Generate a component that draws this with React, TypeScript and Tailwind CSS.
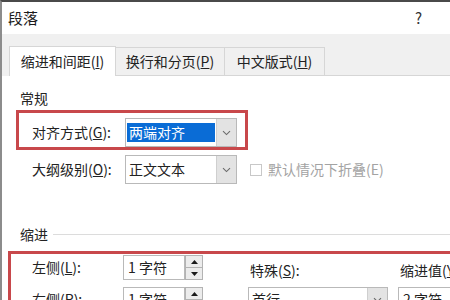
import React from "react";

const FONT = "font-['Microsoft_YaHei','Noto_Sans_CJK_SC','Noto_Sans',sans-serif]";

function Chevron() {
  return (
    <svg width="9" height="6" viewBox="0 0 9 6" fill="none">
      <path d="M1 1.2 L4.5 4.6 L8 1.2" stroke="#6b6b6b" strokeWidth="1.1" />
    </svg>
  );
}

function Combo({ text, hl, w }: { text: string; hl?: boolean; w: string }) {
  return (
    <div className={`${w} shrink-0 h-full flex border border-[#b9b9b9] bg-white`}>
      <div className="flex-1 flex items-center px-[1px]">
        {hl ? (
          <span className="w-full h-[19px] bg-[#0a6cd6] text-white pl-[2px] leading-[19px]">{text}</span>
        ) : (
          <span className="pl-[2px]">{text}</span>
        )}
      </div>
      <div className="w-[20px] bg-[#e3e3e3] border-l border-[#cfcfcf] flex items-center justify-center">
        <Chevron />
      </div>
    </div>
  );
}

function Spin() {
  return (
    <div className="w-[18px] shrink-0 h-full flex flex-col">
      {[0, 1].map(i => (
        <div key={i} className={`flex-1 flex items-center justify-center bg-[#ececec] border border-[#b3b3b3] ${i ? "border-t-0" : ""}`}>
          <svg width="7" height="4" viewBox="0 0 7 4">
            <path d={i ? "M0 0 L7 0 L3.5 4 Z" : "M0 4 L7 4 L3.5 0 Z"} fill="#1a1a1a" />
          </svg>
        </div>
      ))}
    </div>
  );
}

function Field({ text, w }: { text: string; w: string }) {
  return (
    <div className={`${w} shrink-0 h-full flex items-center border border-[#b9b9b9] bg-white pl-[4px] whitespace-nowrap`}>{text}</div>
  );
}

export default function App() {
  return (
    <div className={`relative w-[450px] h-[300px] overflow-hidden bg-white border-t-2 border-l-2 border-t-[#4a4a4a] border-l-[#8c8c8c] text-[14px] text-[#222] ${FONT}`}>
      {/* title bar */}
      <div className="h-[32px] flex items-center justify-between pl-[6px] pr-[28px]">
        <span className="text-[15px] text-[#1a1a1a]">段落</span>
        <span className="text-[15px] text-[#333]">?</span>
      </div>

      {/* tabs */}
      <div className="h-[42px] flex items-end bg-[#f0f0f0] pl-[7px]">
        <div className="w-[107px] shrink-0 h-[30px] bg-white border border-b-0 border-[#d6d6d6] flex items-center justify-center">
          缩进和间距(<u>I</u>)
        </div>
        <div className="w-[109px] shrink-0 h-[29px] border-t border-r border-b border-[#d6d6d6] flex items-center justify-center">
          换行和分页(<u>P</u>)
        </div>
        <div className="w-[100px] shrink-0 h-[29px] border-t border-r border-b border-[#d6d6d6] flex items-center justify-center">
          中文版式(<u>H</u>)
        </div>
        <div className="flex-1 border-b border-[#d6d6d6]" />
      </div>

      {/* 常规 */}
      <div className="mt-[12px] h-[20px] leading-[20px] pl-[18px]">常规</div>

      <div className="mt-[10px] h-[29px] flex items-center pl-[30px]">
        <span className="w-[93px] shrink-0">对齐方式(<u>G</u>):</span>
        <Combo text="两端对齐" hl w="w-[112px]" />
      </div>

      <div className="mt-[8px] h-[29px] flex items-center pl-[30px]">
        <span className="w-[93px] shrink-0">大纲级别(<u>O</u>):</span>
        <Combo text="正文文本" w="w-[112px]" />
        <span className="ml-[13px] shrink-0 w-[12px] h-[12px] border border-[#c8c8c8] bg-white" />
        <span className="ml-[6px] shrink-0 text-[#a3a3a3] whitespace-nowrap">默认情况下折叠(E)</span>
      </div>

      {/* 缩进 */}
      <div className="mt-[40px] h-[20px] flex items-center pl-[18px]">
        <span>缩进</span>
        <span className="ml-[5px] flex-1 h-px bg-[#dcdcdc]" />
      </div>

      <div className="mt-[11px] h-[25px] flex items-center pl-[30px]">
        <span className="w-[91px] shrink-0">左侧(<u>L</u>):</span>
        <Field text="1 字符" w="w-[62px]" />
        <Spin />
        <span className="ml-[47px] w-[150px] shrink-0 mt-[5px]">特殊(<u>S</u>):</span>
        <span className="mt-[5px] shrink-0 whitespace-nowrap">缩进值(<u>Y</u>):</span>
      </div>

      <div className="mt-[7px] h-[25px] flex items-center pl-[30px]">
        <span className="w-[91px] shrink-0">右侧(<u>R</u>):</span>
        <Field text="1 字符" w="w-[62px]" />
        <Spin />
        <div className="ml-[45px] shrink-0 h-full flex">
          <Combo text="首行" w="w-[140px]" />
        </div>
        <div className="ml-[10px] shrink-0 h-full flex">
          <Field text="2 字符" w="w-[80px]" />
        </div>
      </div>

      {/* red annotation boxes */}
      <div className="absolute left-[14px] top-[108px] w-[232px] h-[40px] border-[3px] border-[#c8484b]" />
      <div className="absolute left-[6px] top-[249px] w-[470px] h-[100px] border-[3px] border-[#c8484b]" />
    </div>
  );
}
